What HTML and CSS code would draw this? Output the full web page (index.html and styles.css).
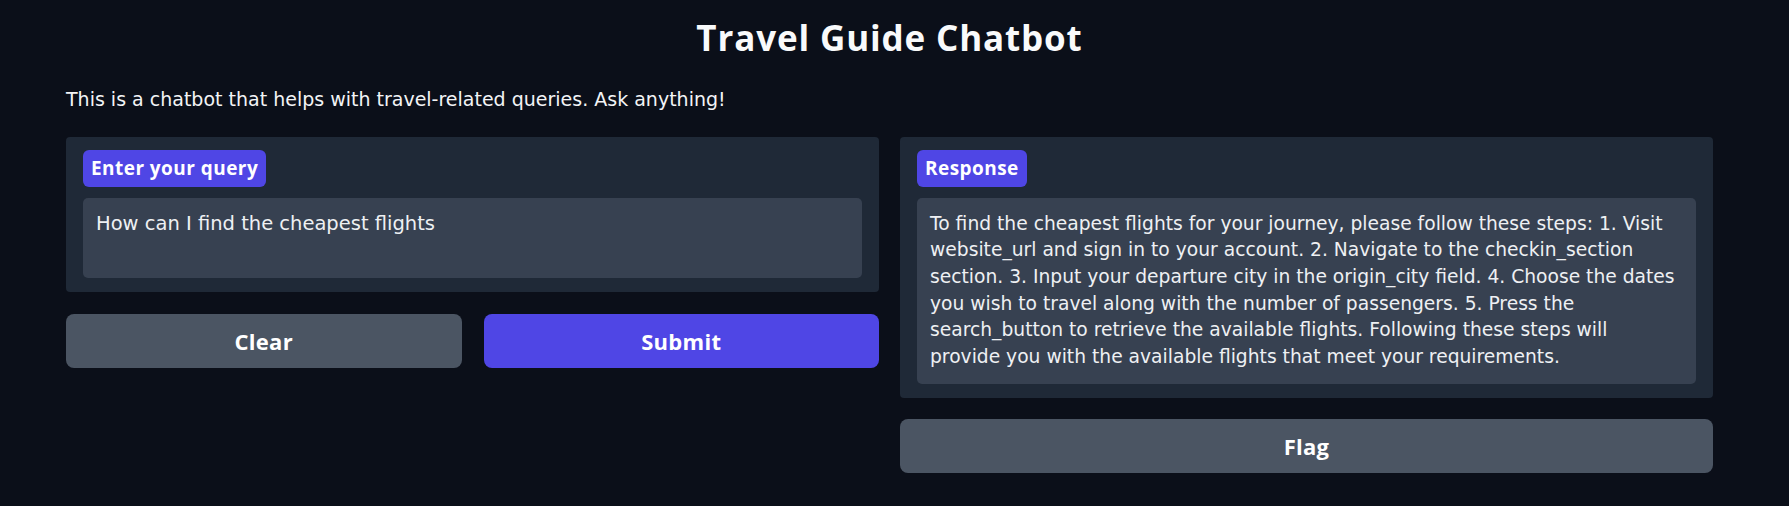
FILE: index.html
```html
<!DOCTYPE html>
<html lang="en">
<head>
<meta charset="utf-8">
<title>Travel Guide Chatbot</title>
<link rel="stylesheet" href="styles.css">
</head>
<body>
<div class="app">
  <h1 class="title">Travel Guide Chatbot</h1>
  <p class="desc">This is a chatbot that helps with travel-related queries. Ask anything!</p>
  <div class="columns">
    <div class="col">
      <div class="block">
        <span class="label">Enter your query</span>
        <div class="textbox input">How can I find the cheapest flights</div>
      </div>
      <div class="btn-row">
        <button class="btn secondary">Clear</button>
        <button class="btn primary">Submit</button>
      </div>
    </div>
    <div class="col">
      <div class="block">
        <span class="label">Response</span>
        <div class="textbox output">To find the cheapest flights for your journey, please follow these steps: 1. Visit<br>website_url and sign in to your account. 2. Navigate to the checkin_section<br>section. 3. Input your departure city in the origin_city field. 4. Choose the dates<br>you wish to travel along with the number of passengers. 5. Press the<br>search_button to retrieve the available flights. Following these steps will<br>provide you with the available flights that meet your requirements.</div>
      </div>
      <button class="btn secondary">Flag</button>
    </div>
  </div>
</div>
</body>
</html>
```
FILE: styles.css
```css
* { box-sizing: border-box; }
html, body {
  margin: 0;
  background: #0b0f19;
  color: #f3f4f6;
  font-family: "DejaVu Sans", "Open Sans", sans-serif;
}
.app {
  padding: 0 76px 0 66px;
}
.title {
  margin: 17px 0 0;
  font-family: "Open Sans", sans-serif;
  font-size: 35px;
  line-height: 42px;
  font-weight: 700;
  letter-spacing: 0.85px;
  text-align: center;
  color: #f9fafb;
}
.desc {
  margin: 27px 0 0;
  font-size: 19px;
  line-height: 26.67px;
}
.columns {
  margin-top: 24px;
  display: grid;
  grid-template-columns: 1fr 1fr;
  gap: 21px;
  align-items: start;
}
.col {
  display: flex;
  flex-direction: column;
  gap: 22px;
}
.block {
  background: #1f2937;
  border-radius: 4px;
  padding: 13px 17px 14px;
  display: flex;
  flex-direction: column;
  align-items: flex-start;
  gap: 11px;
}
.label {
  background: #4f46e5;
  color: #fff;
  font-family: "Open Sans", sans-serif;
  font-weight: 700;
  font-size: 19px;
  letter-spacing: 0.45px;
  height: 37px;
  line-height: 37px;
  padding: 0 8px;
  border-radius: 6px;
}
.textbox {
  align-self: stretch;
  background: #374151;
  border-radius: 5px;
  padding: 13px 12px 12px 13px;
  line-height: 26.67px;
  color: #eef0f3;
}
.input {
  height: 80px;
  font-size: 19.5px;
}
.output {
  font-size: 18.7px;
  padding-bottom: 13px;
}
.btn-row {
  display: grid;
  grid-template-columns: 1fr 1fr;
  gap: 22px;
}
.btn {
  height: 54px;
  border: none;
  border-radius: 8px;
  color: #fff;
  font-family: "Open Sans", sans-serif;
  font-weight: 700;
  font-size: 22px;
  letter-spacing: 0.3px;
  cursor: pointer;
}
.secondary { background: #4b5563; }
.primary { background: #4f46e5; }
.col > .btn { margin-top: -1px; }
```
